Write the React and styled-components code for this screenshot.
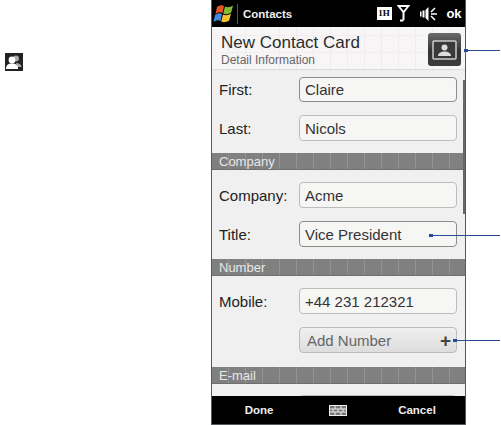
import React from 'react'
import styled, { createGlobalStyle } from 'styled-components'

const Global = createGlobalStyle`
  html, body { margin: 0; padding: 0; background: #fff; }
  body { font-family: "Liberation Sans", Arial, sans-serif; }
`

const Page = styled.div`
  position: relative;
  width: 501px;
  height: 425px;
  overflow: hidden;
  display: flex;
  background: #fff;
`

const Gutter = styled.div`
  width: 211px;
  padding: 53px 0 0 5px;
  box-sizing: border-box;
`

const Phone = styled.div`
  position: relative;
  width: 255px;
  height: 425px;
  box-sizing: border-box;
  border: 1px solid #55585a;
  border-top: 0;
  display: flex;
  flex-direction: column;
  background: #f0f0f0;
  overflow: hidden;
`

const TopBar = styled.div`
  height: 27px;
  flex: none;
  background: #000;
  display: flex;
  align-items: center;
  color: #fff;
  font-weight: 700;
`

const Flag = styled.svg`
  width: 22px;
  height: 21px;
  margin-left: 1px;
  flex: none;
`

const TitleText = styled.span`
  border-left: 1px solid #555;
  margin-left: 2px;
  padding-left: 5px;
  height: 20px;
  line-height: 20px;
  font-size: 11.5px;
  color: #eee;
`

const Status = styled.div`
  margin-left: auto;
  display: flex;
  align-items: center;
`

const StatusSlot = styled.div`
  width: ${p => p.$w}px;
  display: flex;
  justify-content: center;
  font-size: 13px;
`

const Clock = styled.span`
  background: #fff;
  color: #000;
  width: 15px;
  height: 13px;
  font: 700 9px/13px "Liberation Serif", serif;
  text-align: center;
`

const Header = styled.div`
  height: 43px;
  flex: none;
  box-sizing: border-box;
  display: flex;
  justify-content: space-between;
  padding: 6px 4px 0 9px;
  border-bottom: 1px solid #dcdcdc;
  background-color: #f7f5f6;
  background-image:
    repeating-linear-gradient(90deg, transparent 0 16px, #eeeced 16px 17px),
    repeating-linear-gradient(0deg, transparent 0 16px, #f0eeef 16px 17px);
`

const HeaderTitle = styled.div`
  font-size: 17px;
  line-height: 19px;
  color: #2c2c2c;
`

const HeaderSub = styled.div`
  font-size: 12px;
  line-height: 14px;
  margin-top: 1px;
  color: #666;
`

const Avatar = styled.div`
  width: 33px;
  height: 33px;
  border-radius: 3px;
  background: linear-gradient(180deg, #6a6a6a, #333 55%, #3c3c3c);
  display: flex;
  align-items: center;
  justify-content: center;
`

const AvatarCard = styled.svg`
  width: 25px;
  height: 20px;
`

const Body = styled.div`
  position: relative;
  flex: 1;
  display: flex;
  flex-direction: column;
  overflow: hidden;
  padding-top: 7px;
`

const Scroll = styled.div`
  position: absolute;
  top: 10px;
  right: 0;
  width: 2px;
  height: 134px;
  background: #666;
`

const Row = styled.div`
  height: ${p => p.$h ?? 26}px;
  flex: none;
  display: flex;
  align-items: center;
  margin-bottom: ${p => p.$mb ?? 12}px;
  padding-left: 7px;
`

const Label = styled.div`
  width: 80px;
  flex: none;
  font-size: 15px;
  color: #222;
`

const Field = styled.div`
  width: 158px;
  height: 100%;
  box-sizing: border-box;
  flex: none;
  border: 1px solid ${p => (p.$dark ? '#8a8d8a' : '#bcbcbc')};
  border-radius: 4px;
  background: ${p => (p.$button ? 'linear-gradient(180deg,#f0f0f0,#dddddd)' : '#f6f6f5')};
  padding-left: ${p => (p.$button ? 7 : 5)}px;
  padding-right: 4px;
  display: flex;
  align-items: center;
  justify-content: space-between;
  font-size: 15px;
  color: ${p => (p.$button ? '#666' : '#333')};
`

const Plus = styled.span`
  font-size: 19px;
  line-height: 19px;
  font-weight: 700;
  color: #444;
  margin-right: 1px;
`

const Section = styled.div`
  height: 17px;
  flex: none;
  margin-bottom: ${p => p.$mb ?? 12}px;
  padding-left: 7px;
  box-sizing: border-box;
  font-size: 13px;
  line-height: 17px;
  color: #e8e8e8;
  background-color: #808080;
  background-image: repeating-linear-gradient(90deg, transparent 0 16px, #939393 16px 17px);
  border-bottom: 1px solid #6e6e6e;
`

const BottomBar = styled.div`
  height: 28px;
  flex: none;
  background: #000;
  color: #eee;
  font-size: 11.5px;
  font-weight: 700;
  display: grid;
  grid-template-columns: 94px 64px 94px;
  align-items: center;
  justify-items: center;
`

const Callout = styled.div`
  position: absolute;
  left: ${p => p.$x}px;
  top: ${p => p.$y}px;
  width: ${p => 500 - p.$x}px;
  height: 1px;
  background: #2b4a94;
  &::before {
    content: '';
    position: absolute;
    left: -3px;
    top: -1px;
    width: 4px;
    height: 3px;
    background: #2b4a94;
  }
`

function App() {
  return (
    <Page>
      <Global />
      <Gutter>
        <svg width="18" height="18" viewBox="0 0 18 18">
          <rect width="18" height="18" fill="#222" />
          <circle cx="11" cy="5.500" r="3" fill="#aaa" />
          <path d="M11 10c3 0 5 1 5.500 4H12z" fill="#aaa" />
          <circle cx="7" cy="7" r="3.400" fill="#fff" />
          <path d="M1 16c0-4 2-5.500 6-5.500s6 1.500 6 5.500z" fill="#fff" />
        </svg>
      </Gutter>
      <Phone>
        <TopBar>
          <Flag viewBox="0 0 22 21">
            <path d="M4 4c3-2 5-2 7-1l-1.500 7c-2-1-4-1-7 1z" fill="#e8542a" />
            <path d="M12 3.500c2 1 5 1 8-1l-1.800 7c-3 2-6 2-8 1z" fill="#86bc30" />
            <path d="M2 12c3-2 5-2 7-1l-1.500 7c-2-1-4-1-7 1z" fill="#3f8be0" />
            <path d="M10 11.500c2 1 5 1 8-1l-1.800 7c-3 2-6 2-8 1z" fill="#f6c02c" />
          </Flag>
          <TitleText>Contacts</TitleText>
          <Status>
            <StatusSlot $w={18}><Clock>1H</Clock></StatusSlot>
            <StatusSlot $w={20}>
              <svg width="13" height="17" viewBox="0 0 13 17">
                <path d="M1.500 1h10L7 6.500H6z" fill="none" stroke="#fff" strokeWidth="1.800" />
                <path d="M6.500 6v9M3 15.500h3.500" fill="none" stroke="#fff" strokeWidth="2" />
              </svg>
            </StatusSlot>
            <StatusSlot $w={30}>
              <svg width="17" height="14" viewBox="0 0 17 14">
                <path d="M0 4.500h1.500v5H0zM2.500 3.500h2v7h-2zM5.500 3l3-3v14l-3-3z" fill="#fff" />
                <path d="M15 1l-4 4M11 7h6M15 13l-4-4" fill="none" stroke="#fff" strokeWidth="1.600" />
              </svg>
            </StatusSlot>
            <StatusSlot $w={22}>ok</StatusSlot>
          </Status>
        </TopBar>
        <Header>
          <div>
            <HeaderTitle>New Contact Card</HeaderTitle>
            <HeaderSub>Detail Information</HeaderSub>
          </div>
          <Avatar>
            <AvatarCard viewBox="0 0 25 20">
              <rect x="1" y="1" width="23" height="18" rx="1" fill="#3a3a3a" stroke="#ccc" strokeWidth="1.500" />
              <circle cx="12.500" cy="7.500" r="3" fill="#ddd" />
              <path d="M6 16c0-3 3-4.500 6.500-4.500S19 13 19 16z" fill="#ddd" />
            </AvatarCard>
          </Avatar>
        </Header>
        <Body>
          <Scroll />
          <Row $h={25} $mb={13}><Label>First:</Label><Field $dark>Claire</Field></Row>
          <Row><Label>Last:</Label><Field>Nicols</Field></Row>
          <Section>Company</Section>
          <Row $mb={13}><Label>Company:</Label><Field>Acme</Field></Row>
          <Row><Label>Title:</Label><Field $dark>Vice President</Field></Row>
          <Section>Number</Section>
          <Row $mb={13}><Label>Mobile:</Label><Field>+44 231 212321</Field></Row>
          <Row $mb={14}><Label /><Field $button>Add Number<Plus>+</Plus></Field></Row>
          <Section $mb={11}>E-mail</Section>
          <Row><Label /><Field /></Row>
        </Body>
        <BottomBar>
          <span>Done</span>
          <svg width="18" height="11" viewBox="0 0 18 11">
            <rect x="0.500" y="0.500" width="17" height="10" fill="#777" />
            <path d="M0 0.500h18M0 4h18M0 7h18M0 10.500h18M0.500 0v11M17.500 0v11M6 0.500V4M12 0.500V4M4 4v3M9 4v3M14 4v3M6 7v3.500M12 7v3.500" fill="none" stroke="#eee" />
          </svg>
          <span>Cancel</span>
        </BottomBar>
      </Phone>
      <Callout $x={467} $y={50} />
      <Callout $x={432} $y={235} />
      <Callout $x={456} $y={340} />
    </Page>
  )
}

export default App
